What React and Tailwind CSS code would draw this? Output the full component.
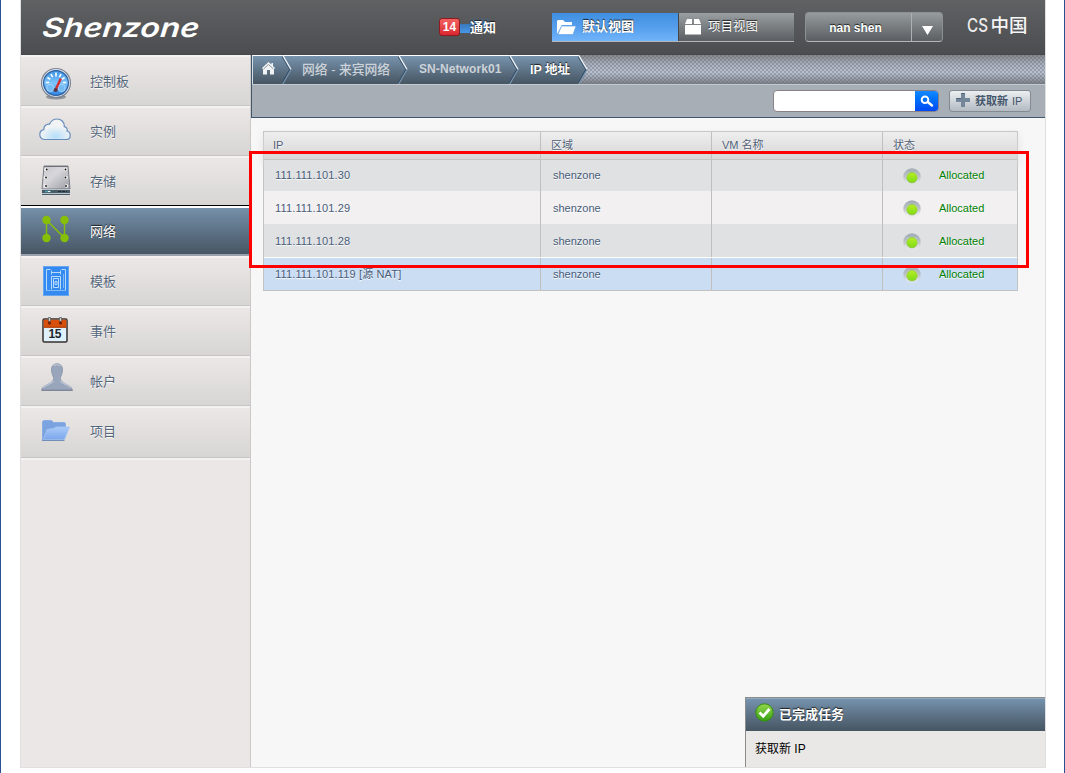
import React from "react";

const shadowDark = "[text-shadow:0_-1px_1px_#1b1b1b]";
const shadowLight = "[text-shadow:0_1px_1px_#ffffff]";

function Gauge() {
  return (
    <svg width="32" height="34" viewBox="0 0 32 34">
      <defs>
        <linearGradient id="gaugeFace" x1="0" y1="0" x2="0" y2="1">
          <stop offset="0" stopColor="#3d92e4" />
          <stop offset=".5" stopColor="#7cc5fb" />
          <stop offset="1" stopColor="#2c84e6" />
        </linearGradient>
      </defs>
      <ellipse cx="16" cy="30" rx="10" ry="2.5" fill="#8f9299" />
      <circle cx="16" cy="16" r="14.5" fill="#d9e0e8" stroke="#7c8594" strokeWidth="1.1" />
      <circle cx="16" cy="16" r="12.4" fill="url(#gaugeFace)" stroke="#2f61a0" strokeWidth="1.200" />
      <path d="M16 5.500v4M11 7l1.600 3.200M7.400 10.500l2.900 1.900M5.800 15.500h3.400M24.600 10.500l-2.900 1.900M26.200 15.500h-3.400M21 7l-1.600 3.200" stroke="#fff" strokeWidth="1.600" />
      <circle cx="10.300" cy="21" r="3.600" fill="#73bbf4" stroke="#b4dcfb" strokeWidth=".8" />
      <circle cx="21.700" cy="21" r="3.600" fill="#73bbf4" stroke="#b4dcfb" strokeWidth=".8" />
      <path d="M20.800 11.500l-4.800 10.500" stroke="#d62d2e" strokeWidth="2.400" />
      <circle cx="15.600" cy="23" r="2.100" fill="#5b3444" />
    </svg>
  );
}

function Cloud() {
  return (
    <svg width="32" height="24" viewBox="0 0 32 24">
      <defs>
        <radialGradient id="cloudGlow" cx=".52" cy=".85" r=".5">
          <stop offset="0" stopColor="#b4defa" />
          <stop offset="1" stopColor="#f1f3f5" />
        </radialGradient>
      </defs>
      <path d="M5.500 21.500C2.300 21.500.8 19 .8 16.500c0-2.700 1.600-4.400 4-4.900-.2-3.300 2.200-5.800 5.700-5.400C11.700 3.200 14.500 1 18 1c4.300 0 7.300 3 7.300 7.200v.5c2.600.4 3.300 2.500 2.700 4.300 2.100.6 3.200 2.300 3.200 4.400 0 2.400-1.700 4.100-4.200 4.100z" fill="url(#cloudGlow)" stroke="#668cbb" strokeWidth="1.200" />
    </svg>
  );
}

function Disk() {
  return (
    <svg width="30" height="31" viewBox="0 0 30 31">
      <defs>
        <linearGradient id="diskTop" x1="0" y1="0" x2="1" y2="1">
          <stop offset="0" stopColor="#c3c4ca" />
          <stop offset=".4" stopColor="#d8d8dc" />
          <stop offset="1" stopColor="#9b9ca4" />
        </linearGradient>
      </defs>
      <path d="M3 1h24l2 23H1z" fill="url(#diskTop)" stroke="#7d7e84" />
      <path d="M3 1.500h24" stroke="#6f7076" />
      <path d="M1 24.500h28V30H1z" fill="#485c68" />
      <path d="M1 24.500h28M1 28.500h28" stroke="#b9c2c8" />
      <path d="M4 26.500h6" stroke="#56a2ae" strokeWidth="1.500" />
      <path d="M7 26.500h2" stroke="#fff" />
      <path d="M17 26.500h9" stroke="#252d33" strokeDasharray="3 1" />
      <g fill="#f5f5f5"><circle cx="5" cy="4.500" r="1.800" /><circle cx="24.500" cy="4.500" r="1.800" /><circle cx="4.500" cy="12.500" r="1.800" /><circle cx="25" cy="12.500" r="1.800" /><circle cx="4.500" cy="21" r="1.800" /><circle cx="25.500" cy="21" r="1.800" /></g>
      <g fill="#111"><circle cx="5.700" cy="4.500" r=".9" /><circle cx="24.500" cy="4.500" r=".9" /><circle cx="5" cy="12.500" r=".9" /><circle cx="24.500" cy="12.500" r=".9" /><circle cx="5" cy="21" r=".9" /><circle cx="25" cy="21" r=".9" /></g>
    </svg>
  );
}

function Net() {
  return (
    <svg width="28" height="28" viewBox="0 0 28 28" fill="#86bf08">
      <path d="M4.500 23V5L22.500 23V5" fill="none" stroke="#86bf08" strokeWidth="1.400" />
      <circle cx="4.500" cy="5" r="4.200" /><circle cx="22.500" cy="5" r="4.200" /><circle cx="4.500" cy="23" r="4.200" /><circle cx="22.500" cy="23" r="4.200" />
    </svg>
  );
}

function Blueprint() {
  return (
    <svg width="26" height="30" viewBox="0 0 26 30">
      <rect width="26" height="30" fill="#348af0" />
      <rect x=".5" y=".5" width="25" height="29" fill="none" stroke="#65a6ef" />
      <g fill="none" stroke="#b9dcfc">
        <path d="M3.500 24.500V3.500h4M18.500 3.500h4v21" /><path d="M8 6.500h10M8.500 4.500v4M17.500 4.500v4M8.500 10.500h9M10.500 12.500h5v9h-5zM8.500 10.500v13M17.500 10.500v13M12 15.500h2v3h-2z" />
        <path d="M3 24.500h20" stroke="#7eb9f6" /><path d="M20.500 8v14" stroke="#7eb9f6" />
      </g>
    </svg>
  );
}

function Calendar() {
  return (
    <svg width="26" height="27" viewBox="0 0 26 27">
      <rect x="1" y="3" width="24" height="23" rx="1.500" fill="#dff2fc" stroke="#35302e" strokeWidth="1.500" />
      <path d="M1.700 3.700h22.600v8H1.700z" fill="#d9500d" />
      <path d="M1.700 11.200h22.600" stroke="#a53b08" />
      <path d="M7.500 1v5M18.500 1v5" stroke="#6f7577" strokeWidth="2.400" />
      <path d="M7.500 2v3M18.500 2v3" stroke="#e6eaea" strokeWidth=".8" />
      <circle cx="7.500" cy="7" r="1.700" fill="#77250a" /><circle cx="18.500" cy="7" r="1.700" fill="#77250a" />
      <text x="13" y="22" textAnchor="middle" fontFamily="Liberation Sans, sans-serif" fontWeight="700" fontSize="12" textLength="13" fill="#22252c">15</text>
    </svg>
  );
}

function Person() {
  return (
    <svg width="32" height="28" viewBox="0 0 32 28">
      <path d="M16 .8c3.800 0 5.800 2.700 5.500 6.500-.2 3.700-1.500 5.500-2 7.200-.5 2.600 1.700 4.400 4.700 6.300 3.500 2 6.700 2.500 7.200 6.500H.6c.5-4 3.700-4.500 7.200-6.500 3-1.900 5.200-3.700 4.700-6.300-.5-1.700-1.800-3.500-2-7.200C10.200 3.500 12.200.8 16 .8z" fill="#99a5bb" stroke="#8892a7" strokeWidth=".8" />
      <path d="M12.500 2.800c1-1.300 5.500-1.500 7 0M2 24.500c3-2.500 8-3.600 10.500-6.500M30 24.500c-3-2.500-8-3.600-10.500-6.500" fill="none" stroke="#c0c9d7" strokeWidth="1.200" />
      <path d="M.6 27.300h31" stroke="#767f92" />
    </svg>
  );
}

function Folder() {
  return (
    <svg width="28" height="21" viewBox="0 0 28 21">
      <defs>
        <linearGradient id="folderFront" x1="0" y1="0" x2="0" y2="1">
          <stop offset="0" stopColor="#a9caf8" /><stop offset="1" stopColor="#7ba6ec" />
        </linearGradient>
      </defs>
      <path d="M.5 20V1.500L1.500.5h8l2 2h11l1 1V8L21 20z" fill="#7ba3df" stroke="#88aee4" />
      <path d="M1.500 19.500L5 9.500l7-1 1.500-1.500H27.500L22.500 19.500z" fill="url(#folderFront)" stroke="#a5c6f4" strokeWidth=".8" />
      <path d="M0 20.400h22.500" stroke="#6c87b4" />
    </svg>
  );
}

const nav = [
  { label: "控制板", Icon: Gauge, box: "h-[51px]", icon: "ml-[19px] mt-[5px]" },
  { label: "实例", Icon: Cloud, box: "h-[50px]", icon: "ml-[18px] -mt-[3px]" },
  { label: "存储", Icon: Disk, box: "h-[50px]", icon: "ml-[20px] -mt-[3px]" },
  { label: "网络", Icon: Net, box: "h-[50px]", icon: "ml-[21px] -mt-[5px]", active: true },
  { label: "模板", Icon: Blueprint, box: "h-[50px]", icon: "ml-[22px] -mt-px" },
  { label: "事件", Icon: Calendar, box: "h-[50px]", icon: "ml-[21px] -mt-[5px]" },
  { label: "帐户", Icon: Person, box: "h-[50px]", icon: "ml-[20px] -mt-[9px]" },
  { label: "项目", Icon: Folder, box: "h-[52px] pb-[2px]", icon: "ml-[21px] -mt-[3px]" },
];

function NavItem({ label, Icon, box, icon, active }) {
  return (
    <li className={`${box} flex items-center ${active
      ? "border-b-2 border-b-[#99a2ad] border-t-2 border-t-white bg-linear-to-b from-[#7590aa] to-[#475664] text-white"
      : `border-b ${label === "存储" ? "border-b-black" : "border-b-[#c5c5c5]"} border-t-2 border-t-[#f3f2f1] bg-linear-to-b from-[#ebe7e6] to-[#d7d6d4] text-[#55677b]`}`}>
      <div className="flex w-[69px] shrink-0"><div className={icon}><Icon /></div></div>
      <span className={`pt-px text-[13px] leading-[20px] ${active ? shadowDark : shadowLight}`}>{label}</span>
    </li>
  );
}

function Chevron({ last }) {
  return (
    <svg width="10" height="30" viewBox="0 0 10 30" className="shrink-0">
      {last && <path d="M0 0L9 14.500L0 29z" fill="url(#crumbFill)" />}
      <defs>
        <linearGradient id="crumbFill" x1="0" y1="0" x2="0" y2="30" gradientUnits="userSpaceOnUse">
          <stop offset="0" stopColor="#7894ae" /><stop offset="1" stopColor="#465562" />
        </linearGradient>
      </defs>
      <path d="M-.5 0L8 14.500L-.5 29.500" fill="none" stroke="#2d4864" strokeWidth="1.300" />
      <path d="M.5 0L9 14.500" fill="none" stroke="#f2f6fa" strokeWidth="1.400" />
      <path d="M9 14.500L.5 29.500" fill="none" stroke="#7892aa" strokeWidth="1.300" />
    </svg>
  );
}

const crumbBg = "flex h-[29px] shrink-0 items-center border-t border-white bg-linear-to-b from-[#7894ae] to-[#465562]";

function Light() {
  return (
    <svg width="18" height="18" viewBox="0 0 18 18">
      <defs>
        <linearGradient id="ringShade" x1="0" y1="0" x2="0" y2="1"><stop offset="0" stopColor="#a0abb3" /><stop offset=".55" stopColor="#bfc5ca" /><stop offset=".9" stopColor="#e8eaeb" stopOpacity=".3" /></linearGradient>
        <linearGradient id="greenLamp" x1="0" y1="0" x2="0" y2="1"><stop offset="0" stopColor="#b7ef25" /><stop offset="1" stopColor="#7ddb16" /></linearGradient>
      </defs>
      <circle cx="9" cy="9" r="8.700" fill="url(#ringShade)" />
      <circle cx="9" cy="10" r="6.300" fill="#dde0e1" opacity=".7" />
      <circle cx="9" cy="9.600" r="5.200" fill="url(#greenLamp)" stroke="#8fc23a" strokeWidth=".8" />
    </svg>
  );
}

const rows = [
  { ip: "111.111.101.30", bg: "h-[31px] bg-[#dfe1e2]" },
  { ip: "111.111.101.29", bg: "h-[33px] bg-[#f2f0f0] pt-px" },
  { ip: "111.111.101.28", bg: "h-[33px] bg-[#dfe1e2] pt-px" },
  { ip: "111.111.101.119 [源 NAT]", bg: "h-[33px] bg-[#cbddf3] border-t border-white" },
];

const grid = "grid grid-cols-[277px_171px_171px_134px]";

export default function App() {
  return (
    <div className="flex h-[773px] w-[1065px] overflow-hidden border-x border-[#2a4f93] bg-white font-['Liberation_Sans','Noto_Sans_CJK_SC',sans-serif]">
      <div className="relative ml-[19px] flex h-[768px] w-[1026px] shrink-0 flex-col border-x border-b border-[#dfdfdf]">
        <header className="flex h-[55px] shrink-0 items-start border-b border-[#46474a] bg-linear-to-b from-[#606163] to-[#4c4d50] text-white">
          <svg width="176" height="40" viewBox="0 0 176 40" className="mt-[8px] ml-[16px] shrink-0">
            <text transform="translate(4.500 29) skewX(-6)" fontFamily="Inter, sans-serif" fontSize="26.500" fontWeight="600" fontStyle="italic" textLength="157" lengthAdjust="spacingAndGlyphs" fill="#fff">Shenzone</text>
          </svg>
          <div className="mt-[18px] ml-[226px] flex w-[113px] items-center">
            <span className="flex h-[18px] w-[21px] items-center justify-center rounded-[3px] border border-[#8e1a1f] bg-linear-to-b from-[#f36060] to-[#d92530] text-[12px] font-bold">14</span>
            <span className="mt-[2px] h-[9px] w-[10px] bg-linear-to-b from-[#3979bd] to-[#4697e8]" />
            <span className={`bg-linear-to-b from-transparent via-[#3c7cc0] via-50% to-transparent bg-[length:19px_14px] bg-no-repeat pt-[2px] text-[13px] leading-[16px] font-bold ${shadowDark}`}>通知</span>
          </div>
          <div className="mt-[13px] flex h-[29px] w-[242px] shrink-0 border-b border-[#b5b5b5]">
            <div className="flex w-[126px] items-center bg-linear-to-b from-[#3f8fe0] via-[#559eed] to-[#70b4fa] pl-[5px]">
              <svg width="19" height="15" viewBox="0 0 19 15"><path d="M0 14V1l1-1h5l2 2h7v3H5z" fill="#fff" /><path d="M1 14.500L4.500 6H19l-3 8.500z" fill="#fff" stroke="#68a8ea" strokeWidth=".7" /></svg>
              <span className={`ml-[6px] text-[13px] font-bold ${shadowDark}`}>默认视图</span>
            </div>
            <div className="flex flex-1 items-center border-l border-[#454649] bg-linear-to-b from-[#9a9fa2] to-[#5b5f63] pl-[6px]">
              <svg width="16" height="16" viewBox="0 0 16 16" fill="#fff"><path d="M2 0h5v5H0zM9 0h5l2 5H9zM0 6h16v9.500H0z" /></svg>
              <span className={`ml-[7px] text-[12.500px] ${shadowDark}`}>项目视图</span>
            </div>
          </div>
          <div className="mt-[12px] ml-[11px] flex h-[30px] w-[138px] shrink-0 rounded-[4px] border border-[#8c9092] border-b-[#b5b5b5] bg-linear-to-b from-[#969b9d] to-[#5b5f63]">
            <span className={`flex w-[106px] items-center justify-center pt-px pr-[6px] text-[12px] font-bold ${shadowDark} border-r border-[#aeb1b3]`}>nan shen</span>
            <span className="flex flex-1 items-center justify-center pt-[6px]"><svg width="11" height="9" viewBox="0 0 11 9"><path d="M0 0h11L5.500 9z" fill="#fff" /></svg></span>
          </div>
          <svg width="72" height="40" viewBox="0 0 72 40" className="mt-[6px] ml-[20px] shrink-0">
            <text x="4" y="25.500" fontFamily="Inter, sans-serif" fontSize="18" fontWeight="500" textLength="21" lengthAdjust="spacingAndGlyphs" fill="#ececec">CS</text>
            <text x="27.500" y="26" fontFamily="Noto Sans CJK SC, sans-serif" fontSize="18.500" fontWeight="500" textLength="37" lengthAdjust="spacingAndGlyphs" fill="#f5f5f5">中国</text>
          </svg>
        </header>

        <div className="flex min-h-0 flex-1">
          <aside className="w-[230px] shrink-0 border-r border-[#cbc8c8] bg-[#ebe7e6]">
            <ul>{nav.map((n) => <NavItem key={n.label} {...n} />)}</ul>
            <div className="h-[2px] bg-[#f3f2f1]" />
          </aside>

          <main className="flex min-w-0 flex-1 flex-col bg-[#f7f7f7]">
            <div className="flex h-[63px] shrink-0 flex-col border-b border-l border-[#40566c] bg-[#a7aeb6]">
              <div className="flex h-[29px] shrink-0 overflow-hidden bg-[conic-gradient(#0000_25%,#5d626d60_0_50%,#0000_0_75%,#5d626d60_0),linear-gradient(#85878b,#a9b0bd_30%,#bcc4d4_60%,#7c8088)] bg-[length:4px_4px,100%_100%]">
                <div className={`${crumbBg} w-[30px] border-l border-l-[#d6dfe8] pl-[9px]`}>
                  <svg width="13" height="13" viewBox="0 0 13 13" className="-mt-[3px]"><path d="M6.500 0L0 6l1 1.200V12.500h4V8h3v4.500h4V7.200L13 6l-2-2V1H9.500v1.500z" fill="#f0f2f4" /><path d="M1.500 7L6.500 2.500L11.500 7" fill="none" stroke="#77828f" strokeWidth=".8" /></svg>
                </div>
                <div className={crumbBg}><Chevron /></div>
                <div className={`${crumbBg} w-[106px] pl-[10px] text-[12.800px] font-medium whitespace-nowrap text-[#ccd2d8]`}>网络 - 来宾网络</div>
                <div className={crumbBg}><Chevron /></div>
                <div className={`${crumbBg} w-[101px] pl-[11px] pb-[2px] text-[12px] font-bold tracking-[0.1px] whitespace-nowrap text-[#ccd2d8]`}>SN-Network01</div>
                <div className={crumbBg}><Chevron /></div>
                <div className={`${crumbBg} w-[59px] pl-[11px] text-[12.500px] font-bold whitespace-nowrap text-white ${shadowDark}`}>IP 地址</div>
                <Chevron last />
              </div>
              <div className="flex flex-1 items-center justify-end border-t border-[#c5cad0] pr-[14px]">
                <div className="flex h-[22px] w-[166px] overflow-hidden rounded-[4px] border border-[#8a8185] bg-white">
                  <span className="flex-1" />
                  <span className="flex w-[23px] items-center justify-center bg-linear-to-b from-[#1689ff] to-[#0048f5]">
                    <svg width="14" height="13" viewBox="0 0 14 13"><circle cx="5" cy="4.700" r="3.300" fill="none" stroke="#fff" strokeWidth="2" /><path d="M7.800 7L12 10.500" stroke="#fff" strokeWidth="2.400" strokeLinecap="round" /></svg>
                  </span>
                </div>
                <div className="ml-[10px] flex h-[22px] w-[82px] items-center rounded-[3px] border border-[#858a90] bg-linear-to-b from-[#eceff1] to-[#b2bbc2] pl-[6px]">
                  <svg width="14" height="14" viewBox="0 0 14 14" className="-mt-[2px] shrink-0"><path d="M5 0h4v5h5v4H9v5H5V9H0V5h5z" fill="#74879a" /><path d="M5 .5h4M.5 5.500h4.500" stroke="#506478" /></svg>
                  <span className="ml-[5px] text-[11px] leading-[16px] font-bold whitespace-nowrap text-[#44566b]">获取新 <span className="ml-px font-normal">IP</span></span>
                </div>
              </div>
            </div>

            <section className="mt-[13px] ml-[12px] w-[755px] border border-[#c3c3c3] text-[11px]">
              <div className={`${grid} h-[28px] border-b border-[#c8c3c3] bg-linear-to-b from-[#eeeeee] to-[#d8d7d7] text-[#4f6076] shadow-[0_4px_10px_#dcdcdc] ${shadowLight}`}>
                {["IP", "区域", "VM 名称", "状态"].map((h, i) => (
                  <div key={h} className={`flex items-center ${i < 3 ? "border-r border-[#bfbfbf]" : ""} ${i === 0 ? "pl-[9px]" : "pl-[10px]"}`}>{h}</div>
                ))}
              </div>
              {rows.map((r) => (
                <div key={r.ip} className={`${grid} ${r.bg} bg-[linear-gradient(#bfbfbf,#bfbfbf),linear-gradient(#bfbfbf,#bfbfbf),linear-gradient(#bfbfbf,#bfbfbf)] bg-[length:1px_100%] bg-[position:276px_0,447px_0,618px_0] bg-no-repeat text-[#475b78] ${shadowLight}`}>
                  <div className="flex items-center pl-[11px] whitespace-pre"><span className="tracking-[0.15px]">{r.ip}</span></div>
                  <div className="flex items-center pl-[12px]">shenzone</div>
                  <div />
                  <div className="flex items-center pl-[20px]">
                    <div className="pt-[2px]"><Light /></div>
                    <span className="ml-[18px] text-[#008000]">Allocated</span>
                  </div>
                </div>
              ))}
            </section>
          </main>
        </div>

        <div className="absolute right-0 bottom-0 h-[70px] w-[300px] border-t border-l border-[#8b8b8b] bg-[#eae8e7]">
          <div className="flex h-[33px] items-center border-t border-[#93a9bd] bg-linear-to-b from-[#7592ad] to-[#465562] pl-[9px] text-white">
            <svg width="19" height="19" viewBox="0 0 19 19" className="-mt-[5px]">
              <defs><linearGradient id="okFill" x1="0" y1="0" x2="0" y2="1"><stop offset="0" stopColor="#94d84b" /><stop offset="1" stopColor="#36a012" /></linearGradient></defs>
              <circle cx="9.500" cy="9.500" r="8.700" fill="url(#okFill)" stroke="#358c16" />
              <path d="M4.500 9.500l3.700 3.700L14.500 6" fill="none" stroke="#fff" strokeWidth="2.700" />
            </svg>
            <span className={`ml-[5px] text-[13px] font-bold ${shadowDark}`}>已完成任务</span>
          </div>
          <div className="flex h-[35px] items-center pl-[9px] text-[12px] text-black">获取新 IP</div>
        </div>

        <div className="pointer-events-none absolute top-[151px] left-[228px] h-[117px] w-[780px] border-3 border-[#ff0000]" />
      </div>
    </div>
  );
}
